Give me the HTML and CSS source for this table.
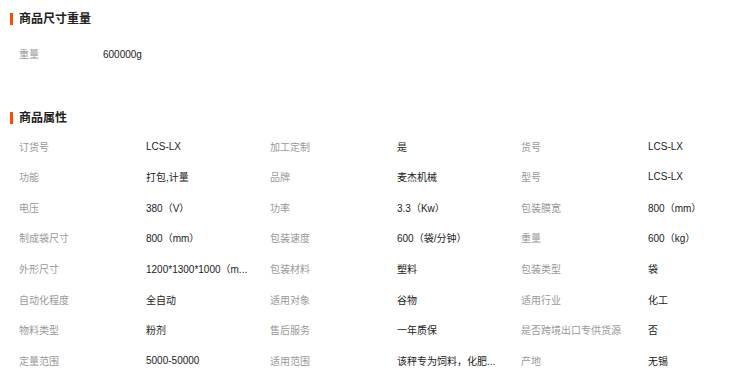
FILE: index.html
```html
<!DOCTYPE html>
<html lang="zh">
<head>
<meta charset="utf-8">
<link rel="stylesheet" href="styles.css">
</head>
<body>
<div class="page">
  <section class="sec sec-size">
    <h2 class="title">商品尺寸重量</h2>
    <div class="row single">
      <span class="lab narrow">重量</span><span class="val">600000g</span>
    </div>
  </section>
  <section class="sec sec-attr">
    <h2 class="title">商品属性</h2>
    <div class="grid">
      <div class="cell"><span class="lab">订货号</span><span class="val">LCS-LX</span></div>
      <div class="cell"><span class="lab">加工定制</span><span class="val">是</span></div>
      <div class="cell"><span class="lab">货号</span><span class="val">LCS-LX</span></div>

      <div class="cell"><span class="lab">功能</span><span class="val">打包,计量</span></div>
      <div class="cell"><span class="lab">品牌</span><span class="val">麦杰机械</span></div>
      <div class="cell"><span class="lab">型号</span><span class="val">LCS-LX</span></div>

      <div class="cell"><span class="lab">电压</span><span class="val">380（V）</span></div>
      <div class="cell"><span class="lab">功率</span><span class="val">3.3（Kw）</span></div>
      <div class="cell"><span class="lab">包装膜宽</span><span class="val">800（mm）</span></div>

      <div class="cell"><span class="lab">制成袋尺寸</span><span class="val">800（mm）</span></div>
      <div class="cell"><span class="lab">包装速度</span><span class="val">600（袋/分钟）</span></div>
      <div class="cell"><span class="lab">重量</span><span class="val">600（kg）</span></div>

      <div class="cell"><span class="lab">外形尺寸</span><span class="val" title="1200*1300*1000（mm）">1200*1300*1000（m...</span></div>
      <div class="cell"><span class="lab">包装材料</span><span class="val">塑料</span></div>
      <div class="cell"><span class="lab">包装类型</span><span class="val">袋</span></div>

      <div class="cell"><span class="lab">自动化程度</span><span class="val">全自动</span></div>
      <div class="cell"><span class="lab">适用对象</span><span class="val">谷物</span></div>
      <div class="cell"><span class="lab">适用行业</span><span class="val">化工</span></div>

      <div class="cell"><span class="lab">物料类型</span><span class="val">粉剂</span></div>
      <div class="cell"><span class="lab">售后服务</span><span class="val">一年质保</span></div>
      <div class="cell"><span class="lab">是否跨境出口专供货源</span><span class="val">否</span></div>

      <div class="cell"><span class="lab">定量范围</span><span class="val">5000-50000</span></div>
      <div class="cell"><span class="lab">适用范围</span><span class="val">该秤专为饲料，化肥...</span></div>
      <div class="cell"><span class="lab">产地</span><span class="val">无锡</span></div>
    </div>
  </section>
</div>
</body>
</html>
```
FILE: styles.css
```css
* { box-sizing: border-box; }
html, body { margin: 0; padding: 0; background: #fff; }
body {
  font-family: "Liberation Sans", "Noto Sans CJK SC", sans-serif;
  font-size: 10px;
  color: #333;
}
.page { padding: 10px 0 0 10px; }
.title {
  position: relative;
  margin: 0;
  height: 18px;
  line-height: 18px;
  font-size: 12px;
  font-weight: bold;
  color: #222;
  padding-left: 9px;
  display: flex;
  align-items: center;
}
.title::before {
  content: "";
  position: absolute;
  left: 0;
  top: 3px;
  width: 3px;
  height: 12px;
  background: #ff4b00;
}
.sec-size .title { margin-bottom: 12px; }
.row.single {
  display: flex;
  height: 30px;
  line-height: 30px;
  padding-left: 9px;
}
.lab { color: #999; white-space: nowrap; }
.val { color: #222; white-space: nowrap; }
.lab.narrow { width: 84px; flex: none; }
.sec-attr { margin-top: 39px; }
.sec-attr .title { margin-bottom: 4px; }
.grid {
  display: grid;
  grid-template-columns: repeat(3, 251px);
  grid-auto-rows: 30.57px;
  padding-left: 9px;
}
.cell {
  display: flex;
  align-items: center;
}
.cell .lab { width: 127px; flex: none; }
.cell .val { width: 112px; flex: none; }
```
